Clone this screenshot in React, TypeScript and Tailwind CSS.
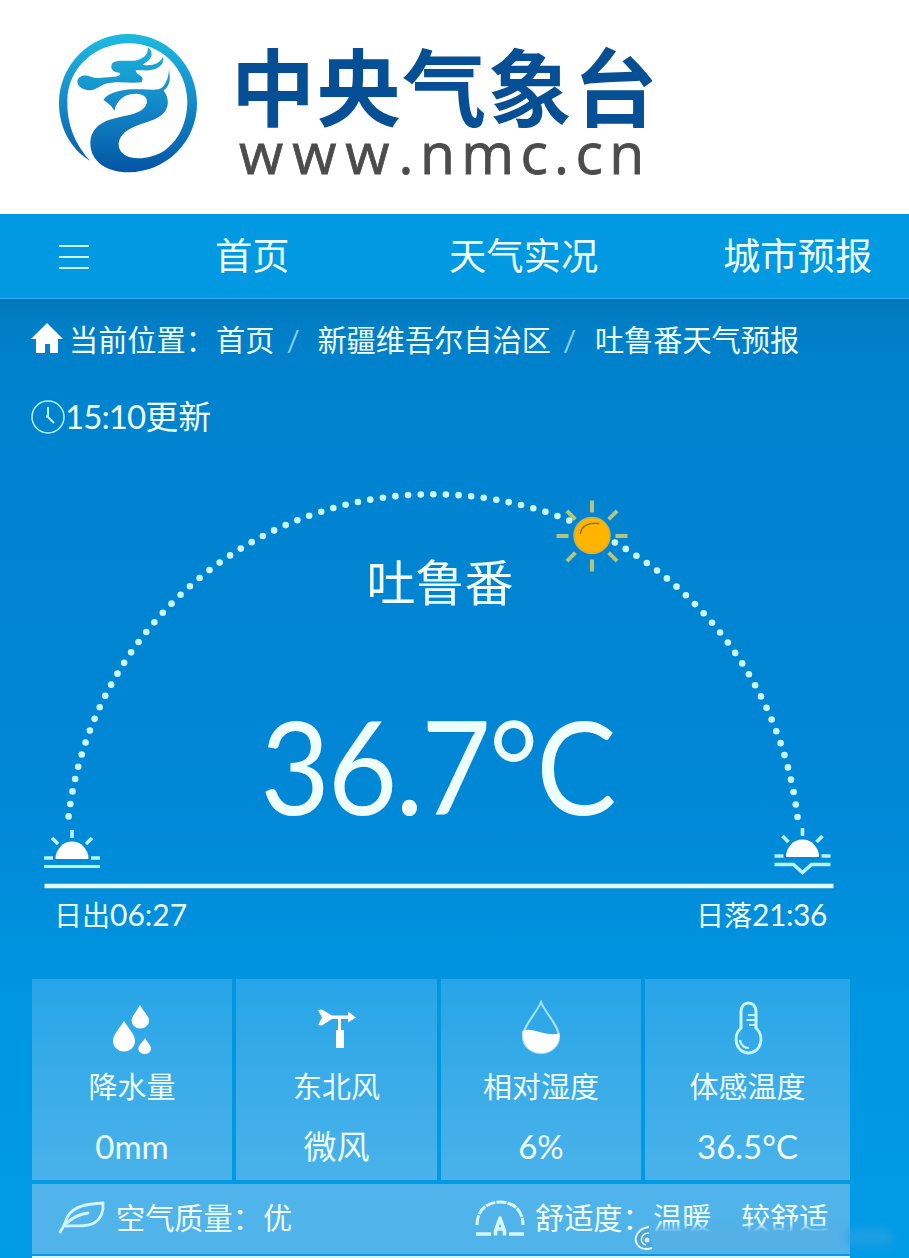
import React from 'react';

const SUN_RAYS = [0, 45, 90, 135, 180, 225, 270, 315];

const DragonLogo: React.FC = () => (
  <svg viewBox="0 0 540 510" className="h-[170px] w-[180px] shrink-0">
    <defs>
      <linearGradient id="dragon" x1="0" y1="40" x2="0" y2="458" gradientUnits="userSpaceOnUse">
        <stop offset="0" stopColor="#1dbbe2" />
        <stop offset="0.5" stopColor="#1489c8" />
        <stop offset="1" stopColor="#0355a6" />
      </linearGradient>
    </defs>
    <g fill="url(#dragon)">
      <path d="M150 422C92 388 57 322 57 250C57 135 150 42 264 42C379 42 471 135 471 250C471 366 379 457 264 457C202 457 151 425 151 369C151 335 174 309 214 298C252 286 294 284 312 264C326 249 325 226 296 222C262 218 232 234 223 272L213 257L190 239C210 215 249 208 286 208C324 206 353 215 369 200C380 188 386 170 387 150C392 178 390 196 371 212C389 235 388 265 366 284C340 307 287 310 255 336C232 356 229 385 250 402C278 424 335 416 373 392C417 362 442 305 442 244C440 143 363 69 264 70C162 71 84 146 82 240C80 313 105 374 150 422Z" />
      <path d="M112 184C114 167 136 162 152 170C170 177 194 172 214 171C238 170 246 162 237 158C218 158 208 143 217 130C226 119 256 124 284 122C310 119 326 104 323 82C340 93 339 115 319 126L308 134C335 139 358 132 369 111C374 138 348 153 309 151L287 151C289 166 308 165 308 178L305 187C265 191 226 181 193 193C177 199 171 209 150 211C130 210 111 200 112 184Z" />
    </g>
  </svg>
);

const Horizon: React.FC<{ setting?: boolean }> = ({ setting }) => (
  <g stroke="#b8f3ff" strokeWidth="3.6" fill="none">
    <path d="M28 0v8M8 8l6 6M48 8l-6 6M0 28h9M47 28h9" />
    {setting ? <path d="M0 36.500h19l9 8l9-8h19" /> : <path d="M0 36.500h56" strokeWidth="2.800" />}
    <path d="M11.500 29a16.500 17.500 0 0 1 33 0z" fill="#fff" stroke="none" />
  </g>
);

const SunTrack: React.FC = () => (
  <svg viewBox="0 460 909 430" className="col-start-1 row-start-1 block h-[430px] w-[909px]">
    <g stroke="#b5c47a" strokeWidth="4">
      {SUN_RAYS.map(a => (
        <path key={a} d="M592 512.500v-12" transform={`rotate(${a} 592 536)`} />
      ))}
    </g>
    <path
      d="M797.500 817A367.200 367.200 0 0 0 68.500 817"
      fill="none"
      stroke="#cbf9ff"
      strokeWidth="6.600"
      strokeLinecap="round"
      pathLength="84.050"
      strokeDasharray="0 1"
    />
    <circle cx="592" cy="535.500" r="18" fill="#ffb400" stroke="#c7b04c" strokeWidth="1.500" />
    <path d="M580.500 534c0-7 7-12 19-10.500" fill="none" stroke="#8a7420" strokeWidth="1.500" />
    <g transform="translate(44 830)"><Horizon /></g>
    <g transform="translate(774.500 828)"><Horizon setting /></g>
    <path d="M44.500 886h789" stroke="#e6ffff" strokeWidth="4.500" />
  </svg>
);

const RainIcon = () => (
  <svg viewBox="0 0 42 52" className="h-[52px] w-[42px]" fill="#fff">
    <path d="M13 17C17 24 24 30 24 37a11 10.500 0 0 1-22 0C2 30 9 24 13 17Z" />
    <path d="M29 1C32 7 38 12 38 16.500a8.700 8 0 0 1-17.400 0C20.600 12 26 7 29 1Z" />
    <path d="M34 34C36 38 40 41 40 44.500a6.300 5.800 0 0 1-12.600 0C27.400 41 32 38 34 34Z" />
  </svg>
);

const WindIcon = () => (
  <svg viewBox="0 0 40 52" className="h-[52px] w-[40px]" fill="#fff">
    <path d="M1 6L5 5.500L15 11.500H31V7.500L39 13.500L31 18.500V15H15L5 21.500L1 21L5 13.500Z" />
    <path d="M21 15h3v11h3v18h-8v-18h2z" />
  </svg>
);

const HumidityIcon = () => (
  <svg viewBox="0 0 40 56" className="h-[56px] w-[40px]">
    <path d="M20 2C16 13 2 25 2 37a18 16 0 0 0 36 0C38 25 24 13 20 2Z" fill="none" stroke="#a9dffb" strokeWidth="2" />
    <path d="M1.500 31C12 26 22 37 38.500 33.500C39 45 31 53 20 53C8 53 1 44 1.500 31Z" fill="#fff" />
  </svg>
);

const ThermometerIcon = () => (
  <svg viewBox="0 0 30 56" className="h-[56px] w-[30px]" fill="none" stroke="#c9f5ff" strokeWidth="3">
    <path d="M8 28V11a7.500 8 0 0 1 15 0V28C32 36 28 53 15.500 53C3 53-1 36 8 28Z" />
    <path d="M15 15h7M13.500 20h8.500M16 25h6" strokeWidth="1.800" />
    <path d="M7 40c1 5 4 8 9 8" strokeWidth="2.200" />
  </svg>
);

const stats = [
  { icon: <RainIcon />, label: '降水量', value: '0mm' },
  { icon: <WindIcon />, label: '东北风', value: '微风' },
  { icon: <HumidityIcon />, label: '相对湿度', value: '6%' },
  { icon: <ThermometerIcon />, label: '体感温度', value: '36.5°C' }
];

export default function App() {
  return (
    <div className="flex h-[1258px] w-[909px] flex-col overflow-hidden bg-white font-[Lato,'Noto_Sans_CJK_SC',sans-serif] text-[#effffd]">
      <header className="flex h-[214px] shrink-0 pt-5 pl-10">
        <DragonLogo />
        <div className="flex flex-col pt-2 pl-[11px] whitespace-nowrap">
          <div className="h-[104px] font-['Noto_Sans_CJK_SC',sans-serif] text-[84px] leading-[112px] font-bold tracking-[1.600px] text-[#064f94]">中央气象台</div>
          <div className="pl-[8px] font-['Open_Sans',sans-serif] text-[57px] leading-[40px] font-medium tracking-[6.400px] text-[#4c4c4c] [-webkit-text-stroke:0.8px_#4c4c4c]">
            <span className="tracking-[9px]">www</span>.nmc.cn
          </div>
        </div>
      </header>

      <nav className="flex h-[85px] shrink-0 items-center border-b border-[#34aef0] bg-[#0099e2] text-[37.300px] leading-[84px] whitespace-nowrap">
        <div className="ml-[59px] flex w-[30px] flex-col gap-[9px] pt-0.5">
          <span className="h-0.5 bg-[#c9faff]" />
          <span className="h-0.5 bg-[#c9faff]" />
          <span className="h-0.5 bg-[#c9faff]" />
        </div>
        <span className="ml-[126px] w-[234px]">首页</span>
        <span className="w-[274px]">天气实况</span>
        <span>城市预报</span>
      </nav>

      <main className="flex h-[959px] flex-col bg-[linear-gradient(180deg,#0078bb_0px,#007fc7_30px,#0083cf_90px,#0085d3_330px,#0087d6_480px,#008fdc_610px,#0096e1_700px,#009be6_959px)]">
        <div className="flex h-[80px] shrink-0 items-center pt-px pl-8 text-[29.200px] whitespace-nowrap">
          <svg viewBox="0 0 30 30" className="mb-1 h-[30px] w-[30px] overflow-visible" fill="#fff">
            <path d="M15 0L31 16H26V30H18V21H13V30H4V16H-1Z" />
          </svg>
          <span className="ml-[7px] w-[147px]">当前位置：</span>
          <span>首页</span>
          <span className="ml-[12px] w-[31px] text-[#8fcdf5]">/</span>
          <span>新疆维吾尔自治区</span>
          <span className="ml-[12px] w-[32px] text-[#8fcdf5]">/</span>
          <span>吐鲁番天气预报</span>
        </div>

        <div className="flex h-[80px] shrink-0 items-center pb-1 pl-[31px] text-[33px] whitespace-nowrap">
          <svg viewBox="0 0 34 34" className="h-[34px] w-[34px]" fill="none" stroke="#b5f3ff" strokeWidth="1.500">
            <circle cx="17" cy="17" r="16" />
            <path d="M17 7v10l6 6M15 16.500h3" strokeWidth="2" />
          </svg>
          <span><span className="tracking-[-0.900px]">15:10</span>更新</span>
        </div>

        {/* Sunrise to sunset */}
        <section className="mt-px grid h-[430px] shrink-0">
          <SunTrack />
          <div className="col-start-1 row-start-1 flex w-[880px] flex-col items-center whitespace-nowrap">
            <div className="mt-[86px] h-[72px] text-[49px] leading-[72px]">吐鲁番</div>
            <div className="mt-[77px] mr-[6px] h-[140px] scale-x-[.925] text-[130px] leading-[140px] tracking-[-2.500px]">36.7°C</div>
          </div>
        </section>
        <div className="flex h-[89px] w-[827px] shrink-0 justify-between pl-[54px] text-[28px] leading-[49px] whitespace-nowrap">
          <span>日出<span className="text-[30px]">06:27</span></span>
          <span>日落<span className="text-[30px] tracking-[-0.400px]">21:36</span></span>
        </div>

        <section className="ml-8 grid h-[201px] w-[818px] shrink-0 grid-cols-[200px_201px_200px_205px] gap-1">
          {stats.map(stat => (
            <div key={stat.label} className="flex flex-col items-center bg-linear-to-b from-[#26a5e7] to-[#49b2ea] whitespace-nowrap">
              <div className="flex h-[84px] items-end pb-[7px]">{stat.icon}</div>
              <div className="h-[48px] text-[29px] leading-[48px]">{stat.label}</div>
              <div className="mt-[11px] text-[33px] leading-[48px]">{stat.value}</div>
            </div>
          ))}
        </section>

        <section className="relative mt-1 ml-8 flex h-[70px] w-[818px] shrink-0 items-center bg-[#50b3ea] pb-[3px] text-[29.200px] whitespace-nowrap">
          <svg viewBox="0 0 48 34" className="ml-[26px] h-[34px] w-[48px]" fill="none" stroke="#d2f4ff" strokeWidth="2.800" strokeLinecap="round">
            <path d="M2 31C7 25 7 20 10 15C16 5 29 3 45 2C46 10 43 18 36 22C27 27 17 24 8 25M9 22C15 16 22 13 30 12" />
          </svg>
          <span className="ml-[10px] w-[147px]">空气质量：</span>
          <span className="w-[212px]">优</span>
          <svg viewBox="0 0 50 36" className="h-[36px] w-[50px]" fill="none" stroke="#d9f6ff" strokeWidth="3">
            <path d="M2 25C2 10 12 2 25 2S48 10 48 25" strokeDasharray="10 1" />
            <path d="M1 34h15M34 34h15" strokeWidth="3.500" />
            <path d="M20.500 35.500V31L25 18L29.500 31V35.500M21.500 29h7" strokeWidth="3.600" strokeLinejoin="round" />
          </svg>
          <span className="ml-[10px] w-[118px]">舒适度：</span>
          <span className="w-[88px]">温暖</span>
          <span>较舒适</span>
          <div className="absolute top-[43px] left-[618px] h-[20px] w-[200px] rounded-full bg-[#55b0e6] blur-[3px]" />
          <div className="absolute top-[44px] left-[816px] h-[18px] w-[46px] rounded-full bg-[#1b9fe3] blur-[4px]" />
          <svg viewBox="0 0 30 26" className="absolute top-[41px] left-[600px] h-[26px] w-[30px]">
            <path d="M17 2C7 3 1 12 5 19C8 24 14 25 20 23" fill="#4aa5d8" stroke="#e4f6fc" strokeWidth="2" />
            <path d="M17 8C8 8 7 19 14 20" fill="none" stroke="#e4f6fc" strokeWidth="1.500" />
            <circle cx="15" cy="15" r="2.500" fill="#d2edf8" />
          </svg>
        </section>
        <div className="mt-[2px] ml-8 h-1 w-[818px] shrink-0 bg-[#d5f2ff]" />
      </main>
    </div>
  );
}
